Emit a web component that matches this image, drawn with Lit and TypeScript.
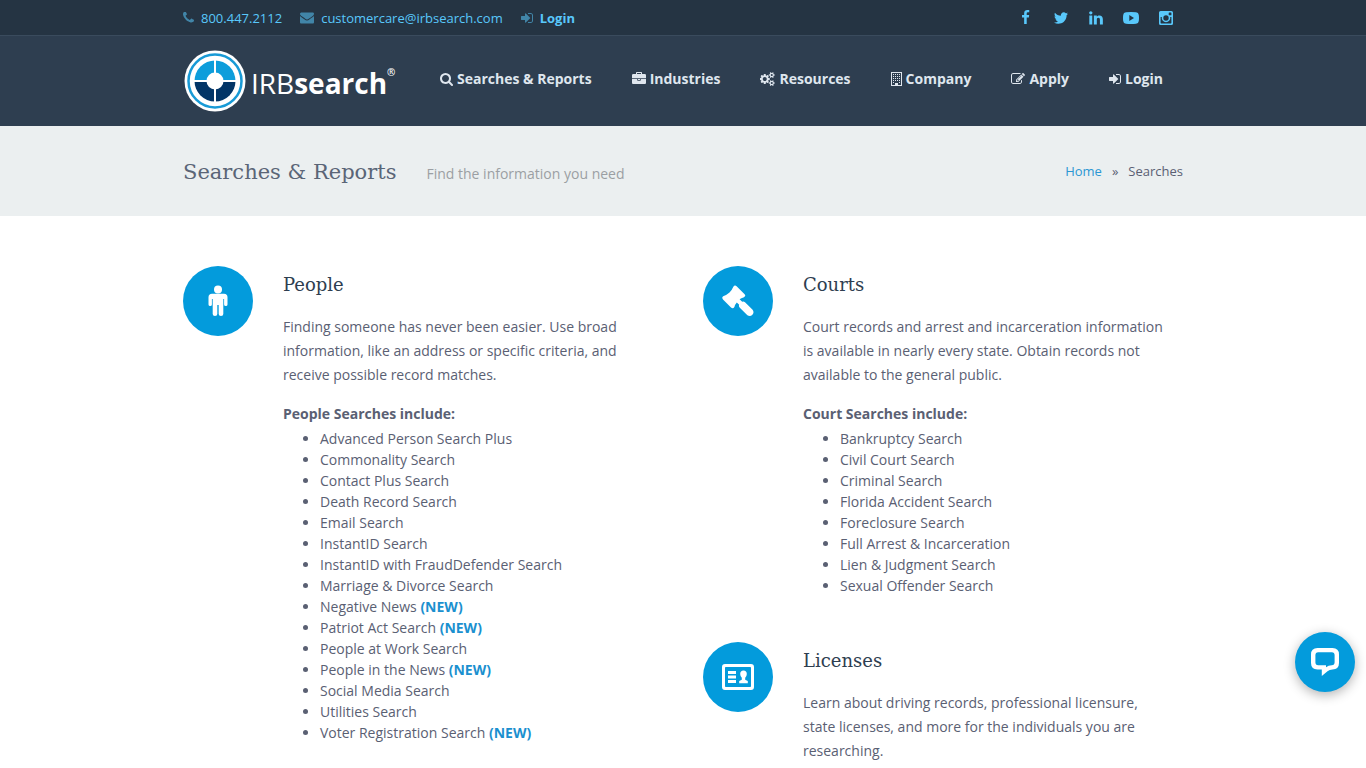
import { LitElement, html, svg, css, nothing } from "lit";
import { customElement } from "lit/decorators.js";

interface Glyph {
  box: string;
  w: number;
  h: number;
  body: unknown;
}

const glyphs: Record<string, Glyph> = {
  phone: {
    box: "192 192 1408 1408", w: 11, h: 11,
    body: svg`<path d="M1600 1240q0 27-10 70.5t-21 68.5q-21 50-122 106-94 51-186 51-27 0-53-3.5t-57.5-12.5-47-14.5-55.5-20.5-49-18q-98-35-175-83-127-79-264-216t-216-264q-48-77-83-175-3-9-18-49t-20.5-55.5-14.5-47-12.5-57.5-3.5-53q0-92 51-186 56-101 106-122 25-11 68.5-21t70.5-10q14 0 21 3 18 6 53 76 11 19 30 54t35 63.5 31 53.5q3 4 17.5 25t21.5 35.5 7 28.5q0 20-28.5 50t-62 55-62 53-28.5 46q0 9 5 22.5t8.5 20.5 14 24 11.5 19q76 137 174 235t235 174q2 1 19 11.5t24 14 20.5 8.5 22.5 5q18 0 46-28.5t53-62 55-62 50-28.5q14 0 28.5 7t35.5 21.5 25 17.5q25 15 53.5 31t63.5 35 54 30q70 35 76 53 3 7 3 21z"/>`,
  },
  envelope: {
    box: "0 64 1792 1792", w: 14, h: 14,
    body: svg`<path d="M1792 710v794q0 66-47 113t-113 47h-1472q-66 0-113-47t-47-113v-794q44 49 101 87 362 246 497 345 57 42 92.5 65.5t94.5 48 110 24.5h2q51 0 110-24.5t94.5-48 92.5-65.5q170-123 498-345 57-39 100-87zm0-294q0 79-49 151t-122 123q-376 261-468 325-10 7-42.5 31t-54 38.5-52 32.5-57.5 27-50 9h-2q-23 0-50-9t-57.5-27-52-32.5-54-38.5-42.5-31q-91-64-262-182.5t-205-142.5q-62-42-117-115.5t-55-136.5q0-78 41.5-130t118.5-52h1472q65 0 112.5 47t47.5 113z"/>`,
  },
  signin: {
    box: "128 0 1536 1792", w: 12, h: 14,
    body: svg`<path d="M1312 896q0 26-19 45l-544 544q-19 19-45 19t-45-19-19-45v-288h-448q-26 0-45-19t-19-45v-384q0-26 19-45t45-19h448v-288q0-26 19-45t45-19 45 19l544 544q19 19 19 45zm352-352v704q0 119-84.5 203.5t-203.5 84.5h-320q-13 0-22.5-9.5t-9.5-22.5q0-4-1-20t-.5-26.5 3-23.5 10-19.5 20.5-6.5h320q66 0 113-47t47-113v-704q0-66-47-113t-113-47h-312l-11.5-1-11.5-3-8-5.5-7-9-2-13.5q0-4-1-20t-.5-26.5 3-23.5 10-19.5 20.5-6.5h320q119 0 203.5 84.5t84.5 203.5z"/>`,
  },
  search: {
    box: "64 128 1664 1664", w: 13, h: 13,
    body: svg`<path d="M1216 832q0-185-131.5-316.5t-316.5-131.5-316.5 131.5-131.5 316.5 131.5 316.5 316.5 131.5 316.5-131.5 131.5-316.5zm512 832q0 52-38 90t-90 38q-54 0-90-38l-343-342q-179 124-399 124-143 0-273.5-55.5t-225-150-150-225-55.5-273.5 55.5-273.5 150-225 225-150 273.5-55.5 273.5 55.5 225 150 150 225 55.5 273.5q0 220-124 399l343 343q37 37 37 90z"/>`,
  },
  briefcase: {
    box: "0 0 1792 1792", w: 14, h: 14,
    body: svg`<path d="M640 256h512v-128h-512v128zm1152 640v480q0 66-47 113t-113 47h-1472q-66 0-113-47t-47-113v-480h672v160q0 26 19 45t45 19h320q26 0 45-19t19-45v-160h672zm-768 0v128h-256v-128h256zm768-480v384h-1792v-384q0-66 47-113t113-47h352v-160q0-40 28-68t68-28h576q40 0 68 28t28 68v160h352q66 0 113 47t47 113z"/>`,
  },
  cogs: {
    box: "-32 0 1920 1792", w: 15, h: 14,
    body: svg`<path d="M832 896q0-106-75-181t-181-75-181 75-75 181 75 181 181 75 181-75 75-181zm768 512q0-52-38-90t-90-38-90 38-38 90q0 53 37.5 90.5t90.5 37.5 90.5-37.5 37.5-90.5zm0-1024q0-52-38-90t-90-38-90 38-38 90q0 53 37.5 90.5t90.5 37.5 90.5-37.5 37.5-90.5zm-384 421v185q0 10-7 19.5t-16 10.5l-155 24q-11 35-32 76 34 48 90 115 7 11 7 20 0 12-7 19-23 30-82.5 89.5t-78.5 59.5q-11 0-21-7l-115-90q-37 19-77 31-11 108-23 155-7 24-30 24h-186q-11 0-20-7.5t-10-17.5l-23-153q-34-10-75-31l-118 89q-7 7-20 7-11 0-21-8-144-133-144-160 0-9 7-19 10-14 41-53t47-61q-23-44-35-82l-152-24q-10-1-17-9.5t-7-19.5v-185q0-10 7-19.5t16-10.5l155-24q11-35 32-76-34-48-90-115-7-11-7-20 0-12 7-20 22-30 82-89t79-59q11 0 21 7l115 90q34-18 77-32 11-108 23-154 7-24 30-24h186q11 0 20 7.5t10 17.5l23 153q34 10 75 31l118-89q8-7 20-7 11 0 21 8 144 133 144 160 0 8-7 19-12 16-42 54t-45 60q23 48 34 82l152 23q10 2 17 10.5t7 19.5zm640 533v140q0 16-149 31-12 27-30 52 51 113 51 138 0 4-4 7-122 71-124 71-8 0-46-47t-52-68q-20 2-30 2t-30-2q-14 21-52 68t-46 47q-2 0-124-71-4-3-4-7 0-25 51-138-18-25-30-52-149-15-149-31v-140q0-16 149-31 13-29 30-52-51-113-51-138 0-4 4-7 4-2 35-20t59-34 30-16q8 0 46 46.5t52 67.5q20-2 30-2t30 2q51-71 92-112l6-2q4 0 124 70 4 3 4 7 0 25-51 138 17 23 30 52 149 15 149 31zm0-1024v140q0 16-149 31-12 27-30 52 51 113 51 138 0 4-4 7-122 71-124 71-8 0-46-47t-52-68q-20 2-30 2t-30-2q-14 21-52 68t-46 47q-2 0-124-71-4-3-4-7 0-25 51-138-18-25-30-52-149-15-149-31v-140q0-16 149-31 13-29 30-52-51-113-51-138 0-4 4-7 4-2 35-20t59-34 30-16q8 0 46 46.5t52 67.5q20-2 30-2t30 2q51-71 92-112l6-2q4 0 124 70 4 3 4 7 0 25-51 138 17 23 30 52 149 15 149 31z"/>`,
  },
  building: {
    box: "0 0 11 14", w: 11, h: 14,
    body: svg`<path fill-rule="evenodd" d="M0 0h11v14H0zM1 1v12h3v-2h3v2h3V1z"/><path d="M2 2h1v1H2zM4 2h1v1H4zM6 2h1v1H6zM8 2h1v1H8zM2 4h1v1H2zM4 4h1v1H4zM6 4h1v1H6zM8 4h1v1H8zM2 6h1v1H2zM4 6h1v1H4zM6 6h1v1H6zM8 6h1v1H8zM2 8h1v1H2zM4 8h1v1H4zM6 8h1v1H6zM8 8h1v1H8zM2 10h1v1H2zM8 10h1v1H8z"/>`,
  },
  edit: {
    box: "0 0 1792 1792", w: 14, h: 14,
    body: svg`<path d="M888 1184l116-116-152-152-116 116v56h96v96h56zm440-720q-16-16-33 1l-350 350q-17 17-1 33t33-1l350-350q17-17 1-33zm80 594v190q0 119-84.5 203.5t-203.5 84.5h-832q-119 0-203.5-84.5t-84.5-203.5v-832q0-119 84.5-203.5t203.5-84.5h832q63 0 117 25 15 7 18 23 3 17-9 29l-49 49q-14 14-32 8-23-6-45-6h-832q-66 0-113 47t-47 113v832q0 66 47 113t113 47h832q66 0 113-47t47-113v-126q0-13 9-22l64-64q15-15 35-7t20 29zm-96-738l288 288-672 672h-288v-288zm444 132l-92 92-288-288 92-92q28-28 68-28t68 28l152 152q28 28 28 68t-28 68z"/>`,
  },
  facebook: {
    box: "0 0 1792 1792", w: 15, h: 15,
    body: svg`<path d="M1343 12v264h-157q-86 0-116 36t-30 108v189h293l-39 296h-254v759h-306v-759h-255v-296h255v-218q0-186 104-288.5t277-102.5q147 0 228 12z"/>`,
  },
  twitter: {
    box: "0 0 1792 1792", w: 16, h: 16,
    body: svg`<path d="M1684 408q-67 98-162 167 1 14 1 42 0 130-38 259.5t-115.5 248.5-184.5 210.5-258 146-323 54.5q-271 0-496-145 35 4 78 4 225 0 401-138-105-2-188-64.5t-114-159.5q33 5 61 5 43 0 85-11-112-23-185.5-111.5t-73.5-205.5v-4q68 38 146 41-66-44-105-115t-39-154q0-88 44-163 121 149 294.5 238.5t371.5 99.5q-8-38-8-74 0-134 94.5-228.5t228.5-94.5q140 0 236 102 109-21 205-78-37 115-142 178 93-10 186-50z"/>`,
  },
  linkedin: {
    box: "0 0 1792 1792", w: 16, h: 16,
    body: svg`<path d="M477 625v991h-330v-991h330zm21-306q1 73-50.5 122t-135.5 49h-2q-82 0-132-49t-50-122q0-74 51.5-122.5t134.5-48.5 133 48.5 51 122.5zm1166 729v568h-329v-530q0-105-40.5-164.5t-126.5-59.5q-63 0-105.5 34.5t-63.5 85.5q-11 30-11 81v553h-329q2-399 2-647t-1-296l-1-48h329v144h-2q20-32 41-56t56.5-52 87-43.5 114.5-15.5q171 0 275 113.5t104 332.5z"/>`,
  },
  youtube: {
    box: "0 1 16 14", w: 16, h: 14,
    body: svg`<path fill-rule="evenodd" d="M3 2.300Q8 1.700 13 2.300Q15.600 2.500 15.800 5Q16.200 8 15.800 11Q15.600 13.500 13 13.700Q8 14.200 3 13.700Q.4 13.500 .2 11Q-.2 8 .2 5Q.4 2.500 3 2.300zM6.300 4.900v6l4.700-3z"/>`,
  },
  instagram: {
    box: "0 0 14 14", w: 14, h: 14,
    body: svg`<path fill-rule="evenodd" d="M1.600 0h10.800Q14 0 14 1.600v10.800Q14 14 12.400 14H1.600Q0 14 0 12.400V1.600Q0 0 1.600 0zM1.600 6v5.800q0 .6 .6 .6h9.600q.6 0 .6-.6V6h-1.200a4.300 4.300 0 1 1-8.400 0zM10.200 1.600q-.5 0-.5.5v1.600q0 .5.5.5h1.700q.5 0 .5-.5V2.100q0-.5-.5-.5zM7 4.300a2.700 2.700 0 1 0 0 5.400a2.700 2.700 0 1 0 0-5.400z"/>`,
  },
  person: {
    box: "0 0 20 32", w: 20, h: 32,
    body: svg`<circle cx="10" cy="4.500" r="4"/><path d="M4 8.800h12q3.500 0 3.500 3.500V19.500q0 1.500-1.700 1.500t-1.700-1.500V14h-.8V29q0 2-2.300 2T10.700 29V20H9.300V29q0 2-2.300 2T4.700 29V14H3.900V19.500Q3.900 21 2.200 21T.5 19.500V12.300Q.5 8.800 4 8.800z"/>`,
  },
  gavel: {
    box: "0 0 32 32", w: 32, h: 32,
    body: svg`<path d="M1.200 11.200Q5 9.800 7.500 7.500Q10 5 11.200 2Q12.600-.3 14.600 1.200L22.600 9.200Q24.200 11 22 12.200Q19 13 17.600 14.200L20.200 16.800Q21.500 16 23 17.200L30.600 24.800Q32.500 27.400 30.400 29.800Q28 32 25.400 30.200L17.800 22.800Q16.400 21.200 17.200 19.800L14.800 17.400Q13 19.300 12.400 22Q11 24.300 9 22.600L1 14.400Q-.6 12.400 1.200 11.200z"/>`,
  },
  license: {
    box: "0 0 32 26", w: 32, h: 26,
    body: svg`<path fill-rule="evenodd" d="M3 0h26q3 0 3 3v20q0 3-3 3H3q-3 0-3-3V3q0-3 3-3zm.8 3q-.8 0-.8.8v18.400q0 .8.8.8h24.400q.8 0 .8-.8V3.800q0-.8-.8-.8z"/><path d="M6 7h8v3H6zM6 11.500h8v3H6zM6 16h8v3H6z"/><path d="M21.500 6.500q3.300 0 3.300 3.500 0 2.200-1.600 3.800v2l2.600 1.200v2.200h-8.600V17l2.600-1.200v-2q-1.600-1.600-1.600-3.800 0-3.500 3.300-3.500z"/>`,
  },
  chat: {
    box: "0 0 28 28", w: 28, h: 28,
    body: svg`<path d="M10.800 27.800V21.500H7Q2.200 21.500 2.200 16.500V7Q2.200 2.200 7 2.200H21Q25.800 2.200 25.800 7V14.500Q25.800 19.500 21 19.500Q16.500 19.600 13 23.200V19.300H7" fill="none" stroke="currentColor" stroke-width="0"/><path fill-rule="evenodd" d="M6.500 0H21.500Q28 0 28 6.500V15Q28 21.300 21.500 21.500Q18.500 21.700 16.500 23.300L10.800 28V21.500H6.500Q0 21.300 0 15V6.500Q0 0 6.500 0zM7.200 4.300Q4.400 4.300 4.400 7.200V14.300Q4.400 17.200 7.200 17.200H15V19.300Q17.400 17.300 20.800 17.200Q23.600 17.200 23.600 14.300V7.200Q23.600 4.300 20.800 4.300z"/>`,
  },
};

const icon = (name: string) => {
  const g = glyphs[name];
  return html`<svg class="icon" viewBox=${g.box} width=${g.w} height=${g.h} aria-hidden="true">${g.body}</svg>`;
};

interface Topic {
  icon: string;
  title: string;
  text: string;
  lead?: string;
  items?: { name: string; fresh?: boolean }[];
}

const list = (...names: string[]) =>
  names.map((n) => (n.startsWith("*") ? { name: n.slice(1), fresh: true } : { name: n }));

const people: Topic = {
  icon: "person",
  title: "People",
  text: "Finding someone has never been easier. Use broad information, like an address or specific criteria, and receive possible record matches.",
  lead: "People Searches include:",
  items: list(
    "Advanced Person Search Plus", "Commonality Search", "Contact Plus Search", "Death Record Search",
    "Email Search", "InstantID Search", "InstantID with FraudDefender Search", "Marriage & Divorce Search",
    "*Negative News", "*Patriot Act Search", "People at Work Search", "*People in the News",
    "Social Media Search", "Utilities Search", "*Voter Registration Search",
  ),
};

const courts: Topic = {
  icon: "gavel",
  title: "Courts",
  text: "Court records and arrest and incarceration information is available in nearly every state. Obtain records not available to the general public.",
  lead: "Court Searches include:",
  items: list(
    "Bankruptcy Search", "Civil Court Search", "Criminal Search", "Florida Accident Search",
    "Foreclosure Search", "Full Arrest & Incarceration", "Lien & Judgment Search", "Sexual Offender Search",
  ),
};

const licenses: Topic = {
  icon: "license",
  title: "Licenses",
  text: "Learn about driving records, professional licensure, state licenses, and more for the individuals you are researching.",
};

const menu = [
  ["search", "Searches & Reports"],
  ["briefcase", "Industries"],
  ["cogs", "Resources"],
  ["building", "Company"],
  ["edit", "Apply"],
  ["signin", "Login"],
];

const socials = [
  ["facebook", "Facebook"],
  ["twitter", "Twitter"],
  ["linkedin", "LinkedIn"],
  ["youtube", "YouTube"],
  ["instagram", "Instagram"],
];

@customElement("app-root")
export class AppRoot extends LitElement {
  static styles = css`
    :host {
      display: block;
      min-height: 100vh;
      background: #fff;
      color: #5a6073;
      font: 14px/24px "Open Sans", "Noto Sans", sans-serif;
    }
    a { color: inherit; text-decoration: none; }
    h1, h2, p, ul { margin: 0; padding: 0; font-weight: 400; }
    .icon { display: block; flex: none; fill: currentColor; }
    .wrap {
      box-sizing: border-box;
      width: 100%;
      max-width: 1000px;
      margin: 0 auto;
      display: flex;
      align-items: center;
      justify-content: space-between;
    }
    .topbar {
      background: #253443;
      border-bottom: 1px solid #3a4b5d;
      color: #59c8fb;
      font-size: 13px;
    }
    .topbar .wrap { height: 35px; }
    .contacts { display: flex; gap: 18px; }
    .contact { display: flex; align-items: center; gap: 7px; }
    .contact .icon { opacity: 0.55; }
    .strong { font-weight: 700; }
    .socials { display: flex; }
    .social { width: 35px; display: flex; align-items: center; justify-content: center; }
    .header { background: #2e3e50; color: #dfe6ee; }
    .header .wrap { height: 90px; padding-right: 20px; }
    .logo { display: flex; align-items: center; gap: 5px; color: #fff; padding-left: 1px; }
    .wordmark { display: flex; align-items: baseline; font: 400 28px/36px "Open Sans", sans-serif; padding-top: 4px; }
    .wordmark b { font-weight: 700; }
    .wordmark sup { font-size: 10px; line-height: 10px; font-weight: 600; align-self: flex-start; padding-top: 2px; }
    .menu { display: flex; gap: 40px; font-weight: 700; }
    .menu a { display: flex; align-items: center; gap: 4px; padding-bottom: 4px; }
    .title { background: #ebeff0; }
    .title .wrap { height: 90px; }
    .heading { display: flex; align-items: baseline; gap: 30px; color: #9b9fa3; padding-top: 2px; }
    .heading h1 { font: 400 21px/32px "Roboto Slab", "DejaVu Serif", serif; color: #5a6577; }
    .crumbs { display: flex; gap: 10px; font-size: 13px; }
    .crumbs a { color: #2c97d3; }
    .columns {
      box-sizing: border-box;
      width: 100%;
      max-width: 1000px;
      margin: 0 auto;
      padding-top: 50px;
      display: grid;
      grid-template-columns: 1fr 1fr;
      gap: 40px;
    }
    .column { display: flex; flex-direction: column; gap: 46px; }
    .topic { display: grid; grid-template-columns: 70px 1fr; column-gap: 30px; }
    .disc {
      width: 70px;
      height: 70px;
      border-radius: 50%;
      background: #039bdc;
      color: #fff;
      display: flex;
      align-items: center;
      justify-content: center;
    }
    .topic h2 { font: 400 18px/28px "Roboto Slab", "DejaVu Serif", serif; color: #2e3e50; padding: 5px 0 16px; }
    .text { padding-right: 12px; }
    .lead { font-weight: 700; padding-top: 15px; }
    .items { padding: 2px 0 0 37px; line-height: 21px; }
    .new { color: #1b90cf; font-weight: 700; }
    .chat {
      position: fixed;
      right: 11px;
      bottom: 76px;
      width: 60px;
      height: 60px;
      padding: 0;
      border: 0;
      border-radius: 50%;
      background: #039bdc;
      color: #fff;
      display: flex;
      align-items: center;
      justify-content: center;
      box-shadow: 0 3px 12px rgba(0, 0, 0, 0.3);
    }
  `;

  private topic(t: Topic) {
    return html`<section class="topic">
      <div class="disc">${icon(t.icon)}</div>
      <div>
        <h2>${t.title}</h2>
        <p class="text">${t.text}</p>
        ${t.lead ? html`<p class="lead">${t.lead}</p>` : nothing}
        ${t.items
          ? html`<ul class="items">
              ${t.items.map((i) => html`<li>${i.name}${i.fresh ? html` <span class="new">(NEW)</span>` : nothing}</li>`)}
            </ul>`
          : nothing}
      </div>
    </section>`;
  }

  render() {
    return html`
      <div class="topbar">
        <div class="wrap">
          <div class="contacts">
            <a class="contact" href="#phone">${icon("phone")}800.447.2112</a>
            <a class="contact" href="#mail">${icon("envelope")}customercare@irbsearch.com</a>
            <a class="contact strong" href="#login">${icon("signin")}Login</a>
          </div>
          <div class="socials">
            ${socials.map(([n, label]) => html`<a class="social" href="#${n}" aria-label=${label}>${icon(n)}</a>`)}
          </div>
        </div>
      </div>
      <header class="header">
        <div class="wrap">
          <a class="logo" href="#home">
            <svg width="62" height="62" viewBox="0 0 62 62" aria-hidden="true">
              <circle cx="31" cy="31" r="30.500" fill="#fff" />
              <circle cx="31" cy="31" r="26.500" fill="none" stroke="#189ad6" stroke-width="2.500" />
              <path d="M10.500 31a20.500 20.500 0 0 1 41 0z" fill="#0d9ddb" />
              <path d="M10.500 31a20.500 20.500 0 0 0 41 0z" fill="#023567" />
              <path d="M31 10v42M10 31h42" stroke="#fff" stroke-width="2" />
              <circle cx="31" cy="31" r="8.500" fill="#fff" />
            </svg>
            <span class="wordmark">IRB<b>search</b><sup>®</sup></span>
          </a>
          <nav class="menu">${menu.map(([n, label]) => html`<a href="#${n}">${icon(n)}${label}</a>`)}</nav>
        </div>
      </header>
      <div class="title">
        <div class="wrap">
          <div class="heading"><h1>Searches &amp; Reports</h1><span>Find the information you need</span></div>
          <nav class="crumbs"><a href="#home">Home</a><span>»</span><span>Searches</span></nav>
        </div>
      </div>
      <main class="columns">
        <div class="column">${this.topic(people)}</div>
        <div class="column">${this.topic(courts)}${this.topic(licenses)}</div>
      </main>
      <button class="chat" type="button" aria-label="Open chat">${icon("chat")}</button>
    `;
  }
}
